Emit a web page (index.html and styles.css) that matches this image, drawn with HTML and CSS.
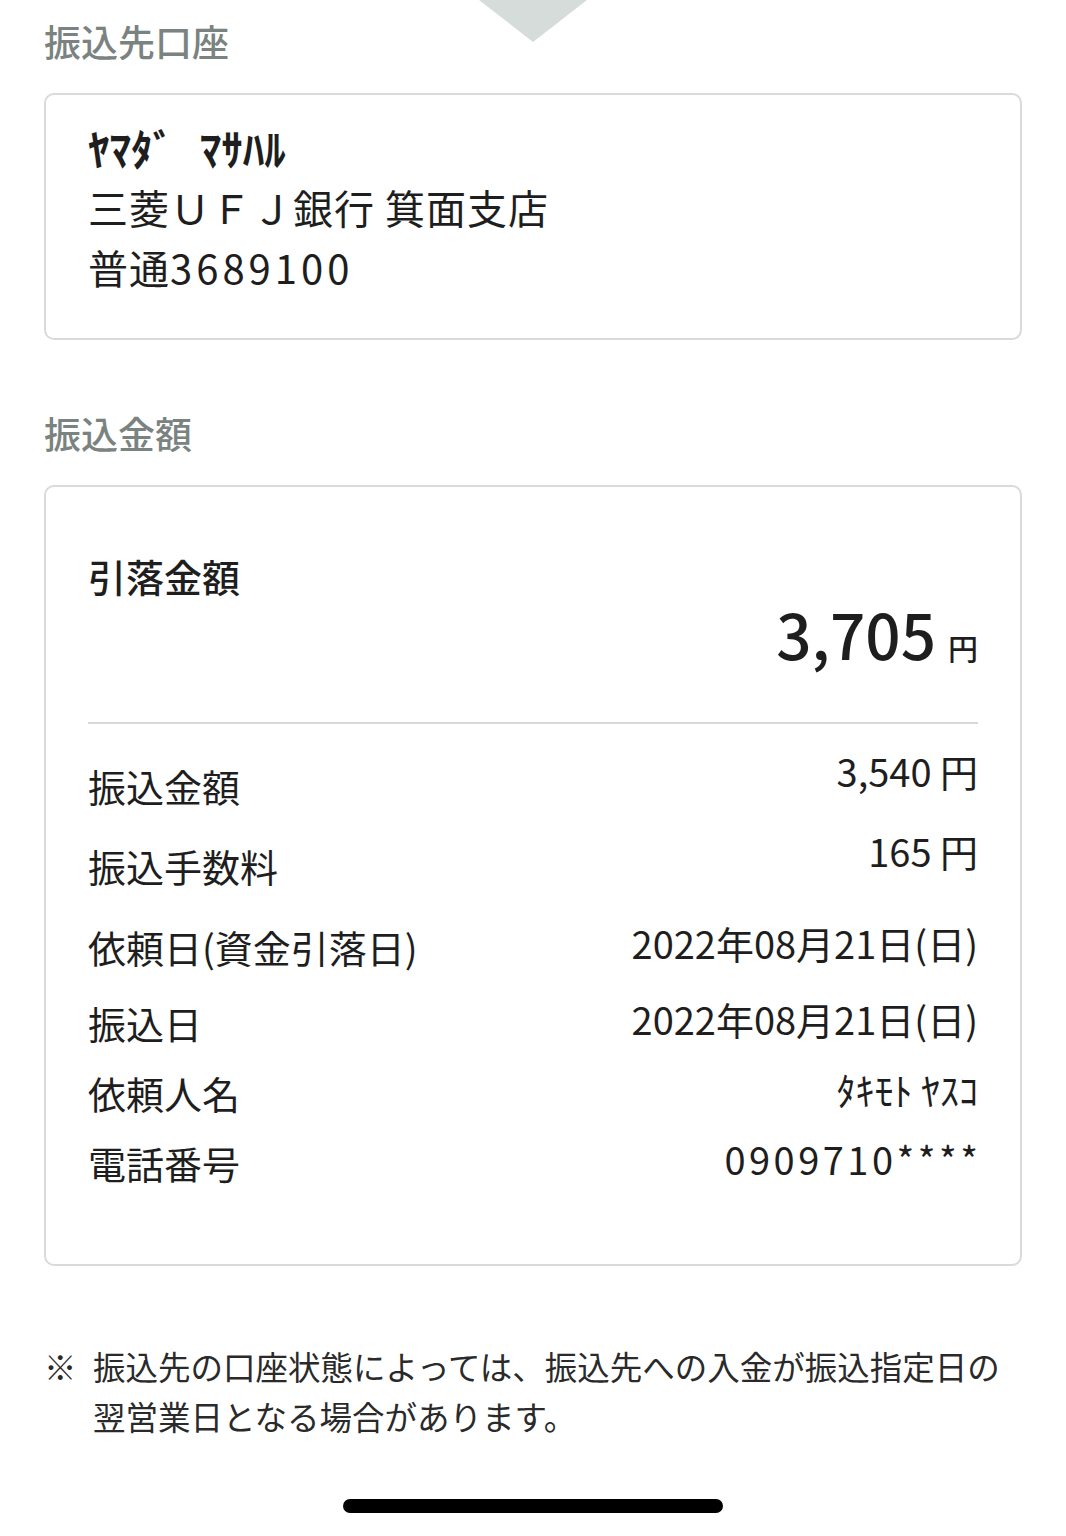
FILE: index.html
```html
<!DOCTYPE html>
<html lang="ja">
<head>
	<meta charset="UTF-8">
	<title>振込内容の確認</title>
	<link rel="stylesheet" href="styles.css">
</head>
<body>
	<div class="page">
		<div class="arrow"></div>

		<h2 class="section-title">振込先口座</h2>
		<div class="card account">
			<p class="payee">ﾔﾏﾀﾞ ﾏｻﾊﾙ</p>
			<p>三菱ＵＦＪ銀行 箕面支店</p>
			<p>普通<span class="num">3689100</span></p>
		</div>

		<h2 class="section-title">振込金額</h2>
		<div class="card amount">
			<p class="total-label">引落金額</p>
			<p class="total"><span class="total-num">3,705</span><span class="yen">円</span></p>
			<div class="line"></div>
			<ul class="rows">
				<li class="row r80"><span>振込金額</span><span class="val up">3,540 円</span></li>
				<li class="row r80"><span>振込手数料</span><span class="val up">165 円</span></li>
				<li class="row r82"><span>依頼日(資金引落日)</span><span class="val">2022年08月21日(日)</span></li>
				<li class="row"><span>振込日</span><span class="val">2022年08月21日(日)</span></li>
				<li class="row"><span>依頼人名</span><span class="val">ﾀｷﾓﾄ ﾔｽｺ</span></li>
				<li class="row"><span>電話番号</span><span class="val phone">0909710****</span></li>
			</ul>
		</div>

		<p class="note"><span class="mark">※</span><span>振込先の口座状態によっては、振込先への入金が振込指定日の<br>翌営業日となる場合があります。</span></p>

		<div class="home-bar"></div>
	</div>
</body>
</html>
```

FILE: styles.css
```css
*{
	margin: 0;
	padding: 0;
	list-style: none;
	box-sizing: border-box;
}
body{
	background: #fff;
	color: #1e1e1e;
	font-family: "Noto Sans CJK JP", "Noto Sans", sans-serif;
}
.page{
	position: relative;
	width: 1066px;
	height: 1536px;
	padding: 16px 44px 0;
}
.arrow{
	position: absolute;
	left: 479px;
	top: 0;
	width: 0;
	height: 0;
	border-left: 54px solid transparent;
	border-right: 54px solid transparent;
	border-top: 42px solid #d6dcda;
}
.section-title{
	font-size: 37px;
	font-weight: 500;
	line-height: 50px;
	color: #7a837f;
	margin-bottom: 27px;
}
.card{
	border: 2px solid #dadada;
	border-radius: 10px;
	padding: 0 42px;
}
.account{
	padding-top: 22px;
	padding-bottom: 41px;
	margin-bottom: 68px;
	font-size: 40px;
	line-height: 60px;
	letter-spacing: 1px;
}
.account .payee{
	font-size: 43px;
	font-weight: 700;
	letter-spacing: 0;
	word-spacing: 16px;
}
.account .num{
	letter-spacing: 4px;
}
.amount{
	margin-top: 2px;
	padding-top: 64px;
	padding-bottom: 67px;
}
.total-label{
	font-size: 38px;
	font-weight: 500;
	line-height: 50px;
}
.total{
	display: flex;
	justify-content: flex-end;
	align-items: baseline;
	gap: 12px;
	line-height: 64px;
	margin-bottom: 57px;
}
.total-num{
	font-size: 62px;
	font-weight: 500;
}
.yen{
	font-size: 30px;
	font-weight: 500;
	line-height: 30px;
}
.line{
	height: 2px;
	background: #d8d8d8;
	margin-bottom: 21px;
}
.row{
	display: flex;
	justify-content: space-between;
	align-items: center;
	height: 70px;
	font-size: 38px;
}
.r80{
	height: 80px;
}
.r82{
	height: 82px;
}
.val{
	font-size: 38px;
	margin-bottom: 8px;
}
.val.up{
	margin-bottom: 30px;
}
.val.phone{
	letter-spacing: 3.5px;
	margin-right: -3.5px;
}
.note{
	display: flex;
	margin-top: 75px;
	font-size: 32.5px;
	line-height: 50px;
	color: #2a2a2a;
}
.note .mark{
	flex: none;
	width: 49px;
}
.home-bar{
	width: 380px;
	height: 14px;
	border-radius: 7px;
	background: #000;
	margin: 58px auto 0;
}
```
